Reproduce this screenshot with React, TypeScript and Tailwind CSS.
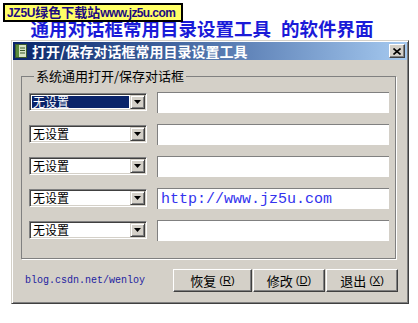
import type { ReactNode } from 'react';

const cjk = "font-['Noto_Sans_CJK_SC','Noto_Sans_CJK_JP',sans-serif]";

function Combo({ selected }: { selected?: boolean }) {
  return (
    <div className="flex h-[18px] w-[118px] border border-t-[#808080] border-l-[#808080] border-r-white border-b-white bg-white shadow-[inset_1px_1px_0_#404040,inset_-1px_-1px_0_#d4d0c8] p-[2px]">
      <div
        className={`flex flex-1 items-center pl-[1px] text-[12px] leading-none ${
          selected ? 'mr-[1px] bg-[#0a246a] text-white' : 'text-black'
        }`}
      >
        无设置
      </div>
      <div className="-my-[1px] -mr-[1px] flex w-[15px] items-center justify-center border border-t-[#d4d0c8] border-l-[#d4d0c8] border-r-[#404040] border-b-[#404040] bg-[#d4d0c8] shadow-[inset_1px_1px_0_#fff,inset_-1px_-1px_0_#808080]">
        <svg width="7" height="4" viewBox="0 0 7 4">
          <path d="M0 0h7L3.5 4z" fill="#000" />
        </svg>
      </div>
    </div>
  );
}

function Edit({ children }: { children?: ReactNode }) {
  return (
    <div className="flex h-[21px] w-[232px] items-center border-t border-l border-[#808080] bg-white pl-[3px]">
      {children}
    </div>
  );
}

function Button({ label, hot, width }: { label: string; hot: string; width: string }) {
  return (
    <div
      className={`flex h-[23px] ${width} items-center justify-center border border-t-white border-l-white border-r-[#404040] border-b-[#404040] bg-[#d4d0c8] shadow-[inset_-1px_-1px_0_#808080] text-[13px] leading-none text-black`}
    >
      {label}
      <span className="ml-[3px] font-['Liberation_Sans',sans-serif] text-[11px]">
        (<span className="underline">{hot}</span>)
      </span>
    </div>
  );
}

export default function App() {
  const rows = [true, false, false, false, false];

  return (
    <div className={`relative h-[323px] w-[418px] overflow-hidden bg-white ${cjk}`}>
      {/* site watermark */}
      <div className="absolute left-[3px] top-[3px] z-10 flex h-[19px] w-[180px] items-center whitespace-nowrap border-2 border-black bg-[#ffff66] pl-[2px] font-bold text-[#1c0a80]">
        <span className="text-[13px] leading-[15px]">
          <span className="font-['Liberation_Sans',sans-serif] text-[12px] tracking-[-0.3px]">JZ5U</span>
          绿色下载站
          <span className="font-['Liberation_Sans',sans-serif] text-[12px] tracking-[-0.6px]">www.jz5u.com</span>
        </span>
      </div>

      <div className="pr-[14px] pt-[17px] text-center text-[18.5px] font-bold leading-[22px] text-[#1a1ad8]">
        通用对话框常用目录设置工具<span className="inline-block w-[10px]" />的软件界面
      </div>

      {/* dialog window */}
      <div className="ml-[11px] mt-[1px] flex h-[264px] w-[398px] flex-col border border-t-[#d4d0c8] border-l-[#d4d0c8] border-r-[#404040] border-b-[#404040] bg-[#d4d0c8] p-[1px] shadow-[inset_1px_1px_0_#fff,inset_-1px_-1px_0_#808080]">
        <div className="flex h-[18px] items-center bg-linear-to-r from-[#0a246a] to-[#a6caf0] px-[2px]">
          <svg width="12" height="14" viewBox="0 0 12 14">
            <rect x="0.5" y="0.5" width="11" height="13" fill="#d8e4c4" stroke="#3c5a2c" />
            <rect x="1" y="1" width="3" height="12" fill="#5a8a3a" />
            <path d="M5 4h5M5 6.5h5M5 9h5" stroke="#3c5a2c" />
          </svg>
          <span className="ml-[5px] flex-1 text-[14px] font-bold leading-none text-white">
            打开/保存对话框常用目录设置工具
          </span>
          <div className="flex h-[14px] w-[16px] items-center justify-center border border-t-white border-l-white border-r-[#404040] border-b-[#404040] bg-[#d4d0c8] shadow-[inset_-1px_-1px_0_#808080]">
            <svg width="8" height="7" viewBox="0 0 8 7">
              <path d="M0.5 0.5l7 6M7.5 0.5l-7 6" stroke="#000" strokeWidth="1.6" />
            </svg>
          </div>
        </div>

        <fieldset className="ml-[8px] mt-[9px] h-[190px] w-[375px] border border-[#808080] pl-[7px] pt-[9px] shadow-[1px_1px_0_#fff]">
          <legend className="ml-[5px] px-[2px] text-[13px] leading-[14px] text-black">
            系统通用打开/保存对话框
          </legend>
          <div className="flex flex-col gap-[11px]">
            {rows.map((sel, i) => (
              <div key={i} className="flex h-[21px] items-start gap-[10px]">
                <div className="mt-[1px]">
                  <Combo selected={sel} />
                </div>
                <Edit>
                  {i === 3 && (
                    <span className="font-['Liberation_Mono',monospace] text-[15px] leading-none text-[#3333ee]">
                      http://www.jz5u.com
                    </span>
                  )}
                </Edit>
              </div>
            ))}
          </div>
        </fieldset>

        <div className="mt-[10px] flex items-center justify-between pl-[12px] pr-[9px]">
          <span className="font-['Liberation_Mono',monospace] text-[10px] leading-none text-[#1e1ea0]">
            blog.csdn.net/wenloy
          </span>
          <div className="flex gap-[1px]">
            <Button label="恢复" hot="R" width="w-[79px]" />
            <Button label="修改" hot="D" width="w-[72px]" />
            <Button label="退出" hot="X" width="w-[72px]" />
          </div>
        </div>
      </div>
    </div>
  );
}
